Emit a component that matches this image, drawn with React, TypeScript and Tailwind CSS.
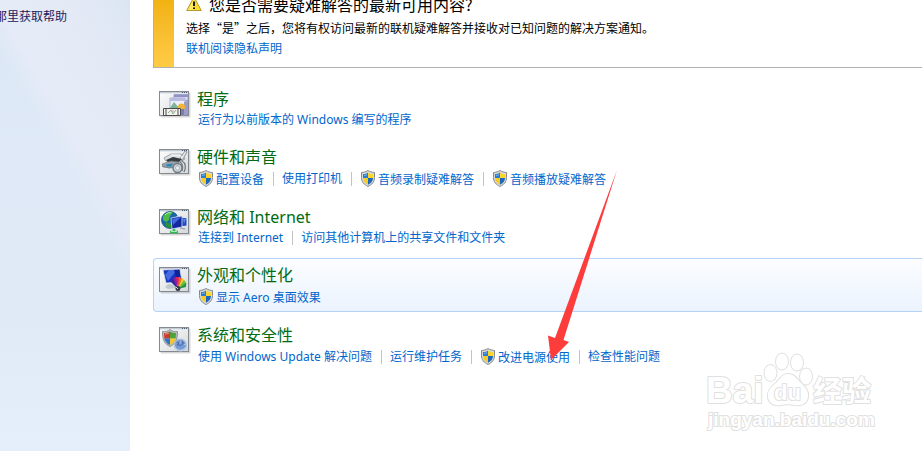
import React from 'react';

interface Task {
    label: string;
    shield?: boolean;
}

interface Category {
    title: string;
    icon: React.ReactNode;
    tasks: Task[];
    active?: boolean;
}

const WindowFrame: React.FC<{ children: React.ReactNode }> = ({ children }) => (
    <svg width="32" height="27" viewBox="0 0 32 27" className="shrink-0" aria-hidden="true">
        <defs>
            <linearGradient id="pane" x1="0" y1="0" x2="1" y2="1">
                <stop offset="0" stopColor="#fdfdfd" />
                <stop offset="1" stopColor="#d5d8da" />
            </linearGradient>
        </defs>
        <rect x="1.5" y="1.5" width="30" height="25" rx="1" fill="#000" opacity="0.16" />
        <rect x="0.5" y="0.5" width="29" height="24" fill="url(#pane)" stroke="#858a90" />
        <path d="M1 1h28v1H1z" fill="#c3ccd5" />
        <path d="M1 2.5h28" stroke="#e4e9ee" />
        <path d="M23 1.5h1M25 1.5h1M27 1.5h1" stroke="#4b5a70" />
        {children}
        <path d="M0.5 0.5v24" stroke="#858a90" />
    </svg>
);

const ProgramsIcon = () => (
    <WindowFrame>
        <path d="M15 3.5h14v6H15z" fill="#dcdcf2" stroke="#9496c4" strokeWidth="0.8" />
        <path d="M15 4h14v2H15z" fill="#8f92c4" />
        <path d="M11 7h15v17H11z" fill="#eeeef8" stroke="#a2a4cb" strokeWidth="0.8" />
        <path d="M11 7h15v3H11z" fill="#b9bbe0" />
        <path d="M28 10h1v14h-4V11z" fill="#9a9dca" />
        <path d="M15 11l5 6h-9z" fill="#79b596" />
        <circle cx="22.500" cy="16" r="3.500" fill="#f3b437" />
        <path d="M19 18h6v6h-6z" fill="#7b7eb4" />
        <path d="M4.500 17.500h17v7h-17z" fill="#f2f3ee" stroke="#4b4b4c" />
        <path d="M7 17v7M19 17v7" stroke="#4b4b4c" />
        <path d="M9 22l3-3 2 4 3-4" stroke="#8dae85" fill="none" />
        <path d="M12 20h3" stroke="#d58fb0" />
    </WindowFrame>
);

const HardwareIcon = () => (
    <WindowFrame>
        <path d="M5 9l7-4h10l4 5-5 3-14-1z" fill="#dde0e3" stroke="#858c93" strokeWidth="0.7" />
        <path d="M21 9l5-7 2 1-5 9z" fill="#dfe3e6" stroke="#70777e" strokeWidth="0.7" />
        <path d="M7 11l7-3 9 2-3 3-11 0z" fill="#353b41" />
        <path d="M3 15l9-3 8 1-5 6-11-1z" fill="#9aa1a7" stroke="#6d747b" strokeWidth="0.6" />
        <path d="M7 15.500l7-1-2 3-4 0z" fill="#2388bb" />
        <path d="M3 17l7 2 4-1" stroke="#6d8a92" fill="none" />
        <circle cx="18.500" cy="19" r="4.500" fill="#cbd3da" stroke="#727a82" strokeWidth="1.400" />
        <circle cx="18.500" cy="19" r="2" fill="#edf2f5" stroke="#9da7af" strokeWidth="0.7" />
        <path d="M23 12c4 2 4 7 2 11M21 13c3 2 3 6 2 9" stroke="#737b83" fill="none" strokeWidth="1.300" />
        <path d="M12 6h9l2 3" stroke="#fff" fill="none" />
    </WindowFrame>
);

const NetworkIcon = () => (
    <WindowFrame>
        <circle cx="11" cy="11" r="8.500" fill="#1868a8" stroke="#124d74" strokeWidth="0.7" />
        <path d="M4 8c1-4 7-6 10-5l-3 4-1 4-3 2-3-2z" fill="#4dbb45" />
        <path d="M7 13l5 2 0 4c-3 0-5-1-6-3z" fill="#2c8f3a" />
        <path d="M6 6c2-2 4-3 6-2" stroke="#c4f0bd" fill="none" />
        <path d="M18 7l10 2v8l-8 1z" fill="#1d46bd" stroke="#e3ecfb" strokeWidth="1" />
        <path d="M12 9l11-2v11l-10 2z" fill="#1429a0" stroke="#d4e1f8" strokeWidth="0.8" />
        <path d="M13 10l9-2-8 8z" fill="#3f6ddf" />
        <path d="M24 9.500l3 .5-2 5z" fill="#5487e4" />
        <path d="M15 20v2M11 23h8" stroke="#2ebd50" strokeWidth="2.400" />
        <path d="M12 22.500h6" stroke="#a4e9ae" />
        <path d="M21 19l5 1" stroke="#a2abb4" strokeWidth="1.500" />
    </WindowFrame>
);

const AppearanceIcon = () => (
    <WindowFrame>
        <path d="M4 3l17-1 2 13-16 1z" fill="#1735bd" stroke="#d9e0ef" strokeWidth="0.8" />
        <path d="M10 3h8L9 14 6 8z" fill="#5079ea" opacity="0.8" />
        <path d="M15 3l3 10h4L20 3z" fill="#0e2498" />
        <path d="M9 17l7 1 1 3-8 1-3-2z" fill="#c2c8d0" />
        <path d="M19 22l-8-8 4-3z" fill="#35249b" />
        <path d="M19 22l-5-11 4-1z" fill="#8b1fae" />
        <path d="M19 22L17 10l4 0z" fill="#de2450" />
        <path d="M19 22l1-12 4 2z" fill="#f36b20" />
        <path d="M19 22l4-11 3 3z" fill="#f3cd2b" />
        <path d="M19 22l6-9 3 4z" fill="#65c140" />
        <path d="M19 22l8-6v4z" fill="#26934d" />
        <circle cx="19" cy="21.500" r="2.500" fill="#353b45" />
        <path d="M17 20l2 2M21 22l2 1" stroke="#d8dde2" />
    </WindowFrame>
);

const SecurityIcon = () => (
    <WindowFrame>
        <path d="M11 2.500c2 2 5 2 7.500 2 0 7-1 12-7.500 15-6.500-3-7.500-8-7.500-15 2.500 0 5.500 0 7.500-2z" fill="#b9bfc1" stroke="#79858b" strokeWidth="0.8" />
        <path d="M11 4.500v7H5.300L5 6c2 0 4 0 6-1.500z" fill="#cf3a2b" />
        <path d="M11 4.500c2 1.500 4 1.500 6 1.500l-.3 5.500H11z" fill="#4da339" />
        <path d="M5.300 11.500H11V18c-3-1-5-4-5.700-6.500z" fill="#3374cb" />
        <path d="M16.700 11.500H11V18c3-1 5-4 5.700-6.500z" fill="#f5c92d" />
        <path d="M6 7c2 0 3-.5 4-1" stroke="#f0a097" fill="none" />
        <circle cx="21.500" cy="18" r="6" fill="#7599d2" stroke="#b4c6de" />
        <path d="M21.500 18v-6a6 6 0 0 1 6 6z" fill="#abc5e8" />
        <path d="M23 13v5h-5l2-2-2-1M23 16h3M24 14v4" stroke="#4668a6" fill="none" />
        <path d="M15.500 20c2 4 9 5 12 0" stroke="#b9cde8" fill="none" strokeWidth="1.500" />
    </WindowFrame>
);

const Shield = () => (
    <svg width="14" height="17" viewBox="0 0 14 17" className="shrink-0" aria-hidden="true">
        <path d="M7 0.500c2 1.300 4 1.800 6.500 2v5c0 4.500-2.500 7-6.500 9-4-2-6.500-4.500-6.500-9v-5C3 2.300 5 1.800 7 .5z" fill="#d9dada" stroke="#85888b" />
        <path d="M7 2.500V8H2V4c2 0 3.500-.5 5-1.500z" fill="#2b7ecd" />
        <path d="M7 2.500C8.500 3.500 10 4 12 4v4H7z" fill="#fbd430" />
        <path d="M2 8h5v6.800C4 13.300 2.200 11.200 2 8z" fill="#f7cb26" />
        <path d="M12 8H7v6.800c3-1.500 4.800-3.600 5-6.800z" fill="#1c66bb" />
        <path d="M3 5.500c1 0 2-.4 3-.8" stroke="#7bb8ed" fill="none" />
    </svg>
);

const WarningIcon = () => (
    <svg width="16" height="16" viewBox="0 0 16 16" className="shrink-0" aria-hidden="true">
        <path d="M8 1l7.300 13.500H.7z" fill="#fbdc2a" stroke="#b49a30" strokeLinejoin="round" />
        <path d="M8 3v11H2z" fill="#fff18b" opacity="0.6" />
        <path d="M8 5.500v4.500" stroke="#1b1b1b" strokeWidth="2" />
        <path d="M7 11.500h2v1.500H7z" fill="#1b1b1b" />
    </svg>
);

const categories: Category[] = [
    {
        title: '程序',
        icon: <ProgramsIcon />,
        tasks: [{ label: '运行为以前版本的 Windows 编写的程序' }]
    },
    {
        title: '硬件和声音',
        icon: <HardwareIcon />,
        tasks: [
            { label: '配置设备', shield: true },
            { label: '使用打印机' },
            { label: '音频录制疑难解答', shield: true },
            { label: '音频播放疑难解答', shield: true }
        ]
    },
    {
        title: '网络和 Internet',
        icon: <NetworkIcon />,
        tasks: [{ label: '连接到 Internet' }, { label: '访问其他计算机上的共享文件和文件夹' }]
    },
    {
        title: '外观和个性化',
        icon: <AppearanceIcon />,
        tasks: [{ label: '显示 Aero 桌面效果', shield: true }],
        active: true
    },
    {
        title: '系统和安全性',
        icon: <SecurityIcon />,
        tasks: [
            { label: '使用 Windows Update 解决问题' },
            { label: '运行维护任务' },
            { label: '改进电源使用', shield: true },
            { label: '检查性能问题' }
        ]
    }
];

const CategoryRow: React.FC<{ category: Category }> = ({ category }) => (
    <section
        className={`flex items-start rounded-l-sm border border-r-0 pt-1.5 pb-1 pl-[5px] mb-1.5 ${
            category.active
                ? 'border-[#b5d3f8] bg-gradient-to-b from-[#fcfdff] to-[#ebf3fe]'
                : 'border-transparent'
        }`}
    >
        <div className="pt-0.5">{category.icon}</div>
        <div className="ml-1.5">
            <h2 className="text-base leading-5 text-[#006b12]">
                <a href="#">{category.title}</a>
            </h2>
            <ul className="mt-px flex items-center text-xs">
                {category.tasks.map((task, index) => (
                    <li key={task.label} className="flex items-center">
                        {index > 0 && <span className="mr-[7px] ml-[9px] h-3.5 w-px bg-[#c4c4c4]" />}
                        <a
                            href="#"
                            className={`flex items-center whitespace-nowrap text-[#0066cc] ${
                                task.shield ? 'h-[21px] gap-[3px] pl-0.5' : 'h-[19px] pl-px'
                            }`}
                        >
                            {task.shield && <Shield />}
                            <span className={task.shield ? 'pt-0.5' : ''}>{task.label}</span>
                        </a>
                    </li>
                ))}
            </ul>
        </div>
    </section>
);

const Banner = () => (
    <section className="flex border-b border-l border-[#b0b0b0]">
        <div className="w-5 shrink-0 bg-gradient-to-b from-[#f2b20f] to-[#ffcb45]" />
        <div className="-mt-1.5 pb-2.5 pl-3 font-['Noto_Sans_CJK_SC',sans-serif] text-xs">
            <h1 className="flex h-5 items-center gap-[7px] whitespace-nowrap text-base leading-5 text-black">
                <WarningIcon />
                您是否需要疑难解答的最新可用内容?
            </h1>
            <p className="mt-1 h-5 whitespace-nowrap leading-5 text-black">
                选择“是”之后，您将有权访问最新的联机疑难解答并接收对已知问题的解决方案通知。
            </p>
            <a href="#" className="mt-px block h-[18px] leading-[18px] text-[#0066cc]">
                联机阅读隐私声明
            </a>
        </div>
    </section>
);

const Pointer = () => (
    <svg
        width="70"
        height="192"
        viewBox="548 169 70 192"
        className="pointer-events-none absolute top-[169px] left-[548px]"
        aria-hidden="true"
    >
        <path d="M617 170L563.500 340 569 342 551 360 548 335.500 555 338z" fill="#fd3c3c" />
    </svg>
);

const Watermark = () => (
    <svg
        width="176"
        height="88"
        viewBox="702 348 176 88"
        className="pointer-events-none absolute top-[348px] left-[702px] [paint-order:stroke]"
        fill="#fff"
        stroke="#e0e0e0"
        strokeWidth="2"
        strokeLinejoin="round"
    >
        <text x="706" y="403" fontSize="37" className="font-['Liberation_Sans',sans-serif] font-bold">Bai</text>
        <ellipse cx="770.500" cy="373" rx="6" ry="8" />
        <ellipse cx="782" cy="361.500" rx="6" ry="8" />
        <ellipse cx="797" cy="362.500" rx="6" ry="8" />
        <ellipse cx="806" cy="376.500" rx="6" ry="8" />
        <path d="M788 374c-6 0-8 5-12 9-5 4-9 8-8 14 1 7 7 9 13 8 5-1 9-1 14 0 7 1 12-2 13-8 1-7-4-11-8-15s-6-8-12-8z" />
        <text x="774" y="400" fontSize="22" className="font-['Liberation_Sans',sans-serif] font-bold">du</text>
        <text x="813" y="402" fontSize="29" className="font-['Noto_Sans_CJK_SC',sans-serif] font-bold">经验</text>
        <text x="708" y="426" fontSize="19" className="font-['Liberation_Sans',sans-serif] font-bold">jingyan.baidu.com</text>
    </svg>
);

export default function App() {
    return (
        <div className="relative flex min-h-screen overflow-hidden bg-white font-['Noto_Sans','Noto_Sans_CJK_SC',sans-serif]">
            <aside className="w-[130px] shrink-0 overflow-hidden bg-[linear-gradient(60deg,transparent_59%,#e5ebf7_65%,#e3eaf6_85%,#dbe5f2),linear-gradient(180deg,#dce7f5,#dfe9f7_40%,#e0eaf6_70%,#e5effb)] pt-2">
                <a href="#" className="-ml-[5px] block whitespace-nowrap text-xs leading-[18px] text-[#1b1b5c]">
                    那里获取帮助
                </a>
            </aside>
            <main className="min-w-0 flex-1 pl-[23px]">
                <Banner />
                <div className="pt-3.5">
                    {categories.map(category => (
                        <CategoryRow key={category.title} category={category} />
                    ))}
                </div>
            </main>
            <Pointer />
            <Watermark />
        </div>
    );
}
